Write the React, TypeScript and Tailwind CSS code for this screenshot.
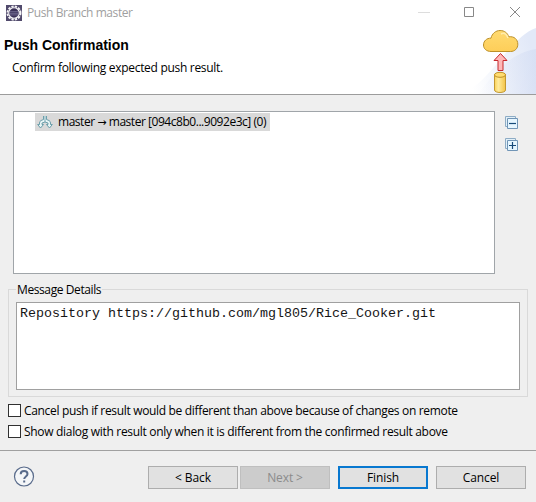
import type { ReactNode } from "react";

function AppIcon() {
  return (
    <svg width="16" height="16" viewBox="0 0 16 16" className="shrink-0">
      <rect width="16" height="16" fill="#514a6c" />
      <circle cx="8" cy="8" r="6.5" fill="none" stroke="#f4f3f6" strokeWidth="2" strokeDasharray="2.3 1.1" />
      <circle cx="8" cy="8" r="5.3" fill="#3a3057" stroke="#f4f3f6" strokeWidth="1.1" />
      <path d="M4 6.7h8M3.5 8.3h9M4 9.9h8" stroke="#8580a5" strokeWidth=".7" />
    </svg>
  );
}

function PushBanner() {
  return (
    <svg width="136" height="70" viewBox="0 0 136 70" className="block">
      <defs>
        <linearGradient id="sweep" gradientUnits="userSpaceOnUse" x1="70" x2="136" y1="60" y2="36">
          <stop offset="0" stopColor="#fff" />
          <stop offset="1" stopColor="#e2e9f8" />
        </linearGradient>
        <linearGradient id="sweep2" x1="0" x2="1">
          <stop offset="0" stopColor="#d5ddf3" stopOpacity="0" />
          <stop offset="1" stopColor="#cdd8f1" />
        </linearGradient>
        <linearGradient id="cyl" x1="0" x2="1">
          <stop offset="0" stopColor="#fbd257" />
          <stop offset=".35" stopColor="#ffeb9c" />
          <stop offset="1" stopColor="#f3c347" />
        </linearGradient>
        <linearGradient id="cloud" x1="0" x2="0" y1="0" y2="1">
          <stop offset="0" stopColor="#ffda70" />
          <stop offset="1" stopColor="#fdce59" />
        </linearGradient>
      </defs>
      <path d="M62 70C92 57 110 13 136 4v66z" fill="url(#sweep)" />
      <path d="M78 70C95 48 111 29 136 25v45z" fill="url(#sweep2)" opacity=".5" />
      <path
        d="M91 27.5c-4.500 0-7.500-2.800-7.500-6.500 0-4 3.200-7 7.500-6.800 1-4.600 4.700-7.700 9.100-7.700 4.300 0 7.400 2.400 8.700 6.300 5.300-.8 9 2.600 9 7.400 0 4.400-3 7.300-7.300 7.300z"
        fill="url(#cloud)"
        stroke="#bc9028"
      />
      <path d="M101 10c4-2 6 1 7 4" fill="none" stroke="#ffecac" strokeWidth="1.500" />
      <path d="M100.500 29.500l6.500 7h-4v10h-5v-10h-4z" fill="#ffb8b8" stroke="#c6282d" />
      <path d="M94.500 50.500v15.500c0 3.300 11 3.300 11 0v-15.500z" fill="url(#cyl)" stroke="#c39831" />
      <ellipse cx="100" cy="50.800" rx="5.500" ry="2.500" fill="#ffdc70" stroke="#bf9026" />
    </svg>
  );
}

function BranchIcon() {
  return (
    <svg width="16" height="16" viewBox="0 0 16 16" className="shrink-0" fill="#e8f5f5" stroke="#5f96a4" strokeWidth=".9">
      <path d="M6.500 2v3.500L4 6.500Q2.500 7.300 2.500 9v1.500H.7L3.500 14l3-3.500H5V9L8 8l3 1v1.500H9.500l3 3.500 2.800-3.500h-1.800V9Q13.500 7.300 12 6.500L9.500 5.500V2" strokeLinejoin="round" />
      <path d="M8 2v6" strokeWidth=".8" />
    </svg>
  );
}

function TreeToolIcon({ plus = false }: { plus?: boolean }) {
  return (
    <svg width="14" height="14" viewBox="0 0 14 14" className="block">
      <path d="M.5 .5h10v10H.5z" fill="#e2f0f8" stroke="#8eacc5" />
      <path d="M2.500 2.500h10v10h-10z" fill="#e6f6ff" stroke="#7195b6" />
      <path d={plus ? "M4 7.500h7M7.500 4v7" : "M4 7.500h7"} stroke="#164a79" strokeWidth="1.200" />
    </svg>
  );
}

function Check({ children, text }: { children: ReactNode; text: string }) {
  return (
    <label className="flex h-[21px] items-center">
      <span className="mr-[3px] size-[13px] shrink-0 border border-[#303030] bg-white" />
      <span className={text}>{children}</span>
    </label>
  );
}

function Button({ children, className }: { children: ReactNode; className: string }) {
  return <button className={`flex h-[23px] w-[90px] items-center justify-center ${className}`}>{children}</button>;
}

export default function App() {
  return (
    <main className="flex h-[502px] w-[536px] flex-col overflow-hidden bg-[#efefef] font-['Open_Sans','Noto_Sans',sans-serif] text-[12px] leading-[16px] whitespace-nowrap text-black">
      <header className="flex h-[95px] shrink-0 flex-col border-b border-[#9c9c9c] bg-white">
        <div className="flex h-[25px] items-center pl-[6px] text-[#a0a0a0]">
          <AppIcon />
          <span className="ml-[5px] tracking-[-0.42px]">Push Branch master</span>
          <svg width="118" height="25" viewBox="0 0 118 25" fill="none" className="ml-auto">
            <path d="M0 12.500h12" stroke="#ddd" />
            <path d="M46.500 7.500h9v9h-9z" stroke="#888" />
            <path d="M92 7l10 10M102 7l-10 10" stroke="#888" />
          </svg>
        </div>
        <div className="flex grow justify-between">
          <div className="pt-[12px]">
            <h1 className="pl-[4px] font-['Liberation_Sans',Arial,sans-serif] text-[14px] leading-[16px] font-bold tracking-[-0.03px]">Push Confirmation</h1>
            <p className="mt-[7px] pl-[12px] tracking-[-0.3px]">Confirm following expected push result.</p>
          </div>
          <div className="-mt-px"><PushBanner /></div>
        </div>
      </header>
      <section className="flex h-[179px] shrink-0 pt-[16px] pl-[13px]">
        <div className="h-[163px] w-[482px] border border-[#a0a5a9] bg-white pl-[21px]">
          <div className="mt-px flex h-[18px] w-[235px] items-center bg-[#d9d9d9] pl-[2px]">
            <BranchIcon />
            <span className="ml-[5px] tracking-[-0.46px]">master <span className="font-['DejaVu_Sans',sans-serif] text-[11px] leading-none">→</span> master [094c8b0...9092e3c] (0)</span>
          </div>
        </div>
        <div className="ml-[10px] flex flex-col gap-[8px] pt-[5px]">
          <TreeToolIcon />
          <TreeToolIcon plus />
        </div>
      </section>
      <fieldset className="mx-[8px] mt-[7px] h-[116px] w-[520px] shrink-0 border border-[#d9d9d9] px-[7px]">
        <legend className="h-[17px] px-[1px] pt-px tracking-[-0.4px]">Message Details</legend>
        <div className="mt-[4px] h-[88px] w-[504px] border border-[#a0a0a0] bg-white pt-[3px] pl-[3px] font-['Liberation_Mono','Courier_New',monospace] text-[13.33px] text-[#151515]">
          Repository https://github.com/mgl805/Rice_Cooker.git
        </div>
      </fieldset>
      <div className="mt-[3px] h-[50px] shrink-0 pl-[8px]">
        <Check text="tracking-[-0.33px]">Cancel push if result would be different than above because of changes on remote</Check>
        <Check text="tracking-[-0.31px]">Show dialog with result only when it is different from the confirmed result above</Check>
      </div>
      <footer className="flex grow items-start border-t border-[#a0a0a0] pt-[15px] pl-[13px]">
        <svg width="22" height="22" viewBox="0 0 22 22" fill="none" stroke="#596b8b">
          <circle cx="11" cy="10.500" r="9.500" fill="#f4f6f8" strokeWidth="1.200" />
          <path d="M7.700 8.300c0-2 1.400-3.200 3.400-3.200 2.100 0 3.400 1.100 3.400 2.900 0 2.400-3.300 2.500-3.300 5M11.200 14.500v2" strokeWidth="2" />
        </svg>
        <div className="ml-auto flex pr-[10px] tracking-[-0.1px]">
          <Button className="mr-[2px] border border-[#adadad] bg-[#e1e1e1]">&lt; Back</Button>
          <Button className="mr-[8px] border border-[#bfbfbf] bg-[#cccccc] text-[#8b8b8b]">Next &gt;</Button>
          <Button className="mr-[8px] border-2 border-[#0878d0] bg-[#e1e1e1]">Finish</Button>
          <Button className="border border-[#adadad] bg-[#e1e1e1]">Cancel</Button>
        </div>
      </footer>
    </main>
  );
}
